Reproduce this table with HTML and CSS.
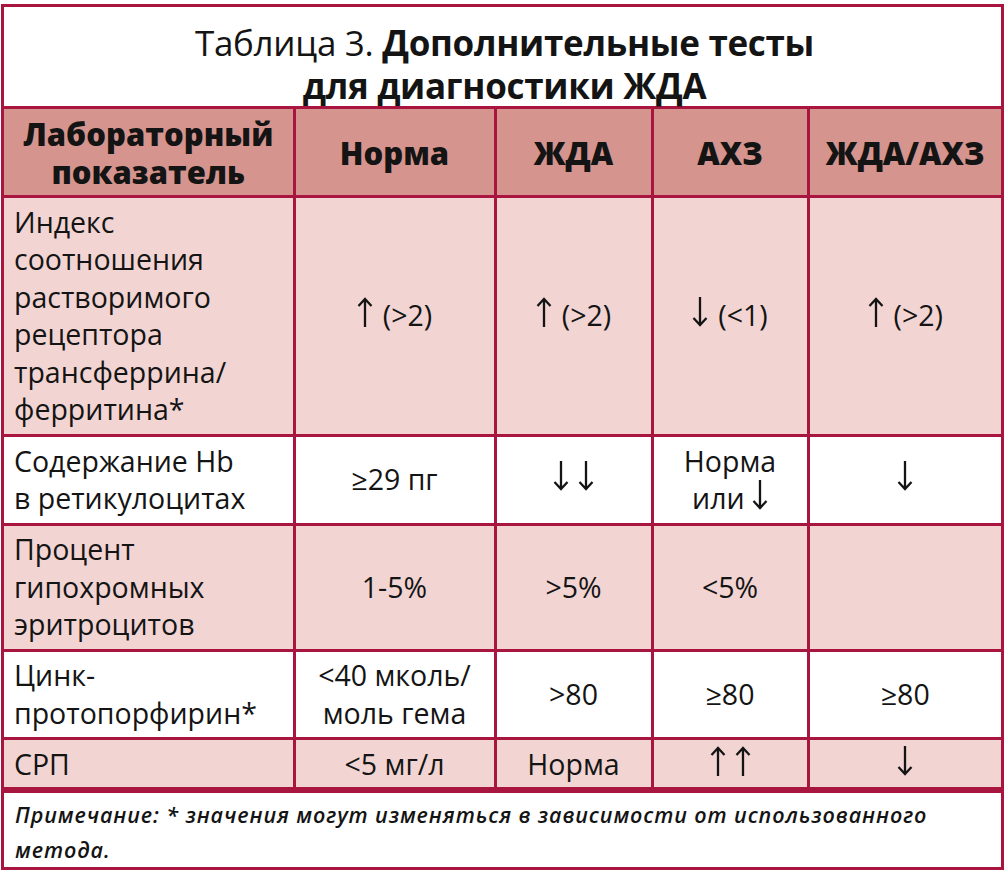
FILE: index.html
```html
<!DOCTYPE html>
<html lang="ru">
<head>
<meta charset="utf-8">
<title>Таблица 3</title>
<link rel="stylesheet" href="styles.css">
</head>
<body>
<div class="frame">
  <div class="title">Таблица 3. <b>Дополнительные тесты<br>для диагностики ЖДА</b></div>
  <table class="grid">
    <colgroup>
      <col class="c1"><col class="c2"><col class="c3"><col class="c4"><col class="c5">
    </colgroup>
    <thead>
      <tr class="head">
        <th>Лабораторный<br>показатель</th>
        <th>Норма</th>
        <th>ЖДА</th>
        <th>АХЗ</th>
        <th>ЖДА/АХЗ</th>
      </tr>
    </thead>
    <tbody>
      <tr class="tint r1">
        <td class="lab">Индекс<br>соотношения<br>растворимого<br>рецептора<br>трансферрина/<br>ферритина*</td>
        <td><svg class="arr lead" viewBox="0 0 16 30" aria-label="↑"><path d="M8 2V30M1.5 9L8 2L14.5 9"/></svg>(&gt;2)</td>
        <td><svg class="arr lead" viewBox="0 0 16 30" aria-label="↑"><path d="M8 2V30M1.5 9L8 2L14.5 9"/></svg>(&gt;2)</td>
        <td><svg class="arr lead" viewBox="0 0 16 30" aria-label="↓"><path d="M8 0V28M1.5 21L8 28L14.5 21"/></svg>(&lt;1)</td>
        <td><svg class="arr lead" viewBox="0 0 16 30" aria-label="↑"><path d="M8 2V30M1.5 9L8 2L14.5 9"/></svg>(&gt;2)</td>
      </tr>
      <tr class="plain r2">
        <td class="lab">Содержание Hb<br>в ретикулоцитах</td>
        <td>≥29 пг</td>
        <td><span class="pair"><svg class="arr" viewBox="0 0 16 30" aria-label="↓"><path d="M8 0V28M1.5 21L8 28L14.5 21"/></svg><svg class="arr" viewBox="0 0 16 30" aria-label="↓"><path d="M8 0V28M1.5 21L8 28L14.5 21"/></svg></span></td>
        <td>Норма<br>или <svg class="arr" viewBox="0 0 16 30" aria-label="↓"><path d="M8 0V28M1.5 21L8 28L14.5 21"/></svg></td>
        <td><svg class="arr" viewBox="0 0 16 30" aria-label="↓"><path d="M8 0V28M1.5 21L8 28L14.5 21"/></svg></td>
      </tr>
      <tr class="tint r3">
        <td class="lab">Процент<br>гипохромных<br>эритроцитов</td>
        <td>1-5%</td>
        <td>&gt;5%</td>
        <td>&lt;5%</td>
        <td></td>
      </tr>
      <tr class="plain r4">
        <td class="lab">Цинк-<br>протопорфирин*</td>
        <td>&lt;40 мколь/<br>моль гема</td>
        <td>&gt;80</td>
        <td>≥80</td>
        <td>≥80</td>
      </tr>
      <tr class="tint r5">
        <td class="lab">СРП</td>
        <td>&lt;5 мг/л</td>
        <td>Норма</td>
        <td><span class="pair"><svg class="arr" viewBox="0 0 16 30" aria-label="↑"><path d="M8 2V30M1.5 9L8 2L14.5 9"/></svg><svg class="arr" viewBox="0 0 16 30" aria-label="↑"><path d="M8 2V30M1.5 9L8 2L14.5 9"/></svg></span></td>
        <td><svg class="arr" viewBox="0 0 16 30" aria-label="↓"><path d="M8 0V28M1.5 21L8 28L14.5 21"/></svg></td>
      </tr>
    </tbody>
  </table>
  <div class="note">Примечание: * значения могут изменяться в зависимости от использованного<br>метода.</div>
</div>
</body>
</html>
```

FILE: styles.css
```css
html, body {
  margin: 0;
  padding: 0;
  background: #ffffff;
}
body {
  padding: 4px 2px 0 1px;
  font-family: "Open Sans", "Noto Sans", "DejaVu Sans", sans-serif;
  color: #141414;
}
.frame {
  border: 3px solid #a8163f;
  box-sizing: border-box;
  width: 1003px;
}
.title {
  height: 99px;
  box-sizing: border-box;
  padding-top: 14px;
  padding-left: 4px;
  text-align: center;
  font-size: 35px;
  line-height: 43px;
  font-weight: 400;
  letter-spacing: -0.3px;
}
.title b {
  font-weight: 700;
}
.grid {
  width: 100%;
  border-collapse: collapse;
  table-layout: fixed;
}
.c1 { width: 290px; }
.c2 { width: 201px; }
.c3 { width: 157px; }
.c4 { width: 156px; }
.c5 { width: auto; }
.grid th, .grid td {
  border: 3px solid #a8163f;
  padding: 0;
  text-align: center;
  vertical-align: middle;
  font-size: 28.5px;
  line-height: 37.5px;
}
.grid tr > :first-child { border-left: none; }
.grid tr > :last-child { border-right: none; }
.grid thead th {
  border-top: 3px solid #a8163f;
  background: #d6948f;
  font-weight: 800;
  font-size: 31px;
  height: 84px;
  line-height: 38px;
  padding-top: 2px;
}
.grid td.lab {
  text-align: left;
  padding-left: 10px;
}
.arr {
  width: 16px;
  height: 30px;
  vertical-align: -1px;
  fill: none;
  stroke: #141414;
  stroke-width: 2.3;
}
.arr.lead {
  margin-right: 10px;
}
.pair {
  display: inline-flex;
  gap: 9px;
  vertical-align: -1px;
}
.pair .arr {
  vertical-align: 0;
}
.tint td { background: #f2d5d3; }
.plain td { background: #ffffff; }
.r1 td { height: 236px; }
.r2 td { height: 86px; }
.r3 td { height: 123px; }
.r4 td { height: 85px; }
.r5 td { height: 47px; line-height: 40px; }
.note {
  border-top: 3px solid #a8163f;
  height: 77px;
  box-sizing: border-box;
  padding: 4px 0 0 11px;
  font-style: italic;
  font-weight: 600;
  font-size: 21.5px;
  line-height: 35px;
  letter-spacing: 0.9px;
}
```
